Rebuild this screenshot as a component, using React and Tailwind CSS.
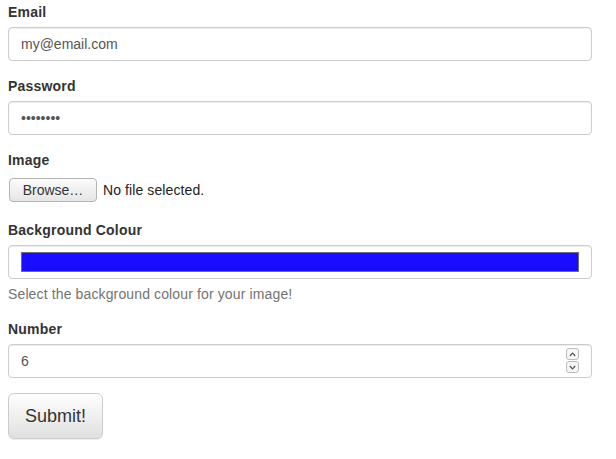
import React from 'react';

const Label = ({ children }) => (
  <label className="block mb-[5px] text-[14px] leading-[20px] font-bold tracking-[0.2px] text-[#333]">{children}</label>
);

const inputCls =
  'block w-full h-[34px] px-[12px] py-[6px] text-[14px] leading-[20px] text-[#555] bg-white border border-[#ccc] rounded-[4px] shadow-[inset_0_1px_1px_rgba(0,0,0,0.075)] outline-none';

const Chevron = ({ up }) => (
  <svg width="7" height="5" viewBox="0 0 7 5" className="block">
    <path d={up ? 'M0.8 4 L3.5 1.2 L6.2 4' : 'M0.8 1 L3.5 3.8 L6.2 1'} fill="none" stroke="#555" strokeWidth="1.2" />
  </svg>
);

export default function App() {
  return (
    <div className="bg-white min-h-[459px] pt-[2px] px-[8px] font-['Liberation_Sans',Arial,sans-serif]">
      <form className="w-[584px]" onSubmit={(e) => e.preventDefault()}>
        <div className="mb-[15px]">
          <Label>Email</Label>
          <input type="text" readOnly value="my@email.com" className={inputCls} />
        </div>

        <div className="mb-[15px]">
          <Label>Password</Label>
          <input type="text" readOnly value="••••••••" className={inputCls} />
        </div>

        <div className="mb-[15px]">
          <Label>Image</Label>
          <div className="h-[30px] flex items-center pl-[1px]">
            <button
              type="button"
              className="h-[24px] w-[88px] text-[14px] text-[#333] border border-[#b4b4b4] rounded-[4px] bg-gradient-to-b from-[#fbfbfb] to-[#e6e6e6]"
            >
              Browse…
            </button>
            <span className="ml-[6px] text-[14px] tracking-[0.1px] text-[#222]">No file selected.</span>
          </div>
        </div>

        <div className="mb-[15px]">
          <Label>Background Colour</Label>
          <div className="h-[34px] border border-[#ccc] rounded-[4px] bg-white px-[12px] py-[6px] shadow-[inset_0_1px_1px_rgba(0,0,0,0.075)]">
            <div className="h-[20px] bg-[#1a0dff] border border-[#6f6f6f]" />
          </div>
          <p className="mt-[5px] text-[14px] leading-[20px] tracking-[0.13px] text-[#737373]">
            Select the background colour for your image!
          </p>
        </div>

        <div className="mb-[15px]">
          <Label>Number</Label>
          <div className="relative">
            <input type="text" readOnly value="6" className={inputCls} />
            <div className="absolute right-[13px] top-[4px] flex flex-col gap-[1px]">
              <div className="w-[13px] h-[12px] border border-[#bbb] rounded-[3px] flex items-center justify-center bg-[#f6f6f6]">
                <Chevron up />
              </div>
              <div className="w-[13px] h-[12px] border border-[#bbb] rounded-[3px] flex items-center justify-center bg-[#f6f6f6]">
                <Chevron />
              </div>
            </div>
          </div>
        </div>

        <button
          type="submit"
          className="h-[46px] w-[95px] px-[16px] text-[18px] leading-[24px] text-[#333] border border-[#ccc] rounded-[6px] bg-gradient-to-b from-white to-[#e0e0e0] shadow-[inset_0_1px_0_rgba(255,255,255,0.15),0_1px_1px_rgba(0,0,0,0.075)]"
        >
          Submit!
        </button>
      </form>
    </div>
  );
}
